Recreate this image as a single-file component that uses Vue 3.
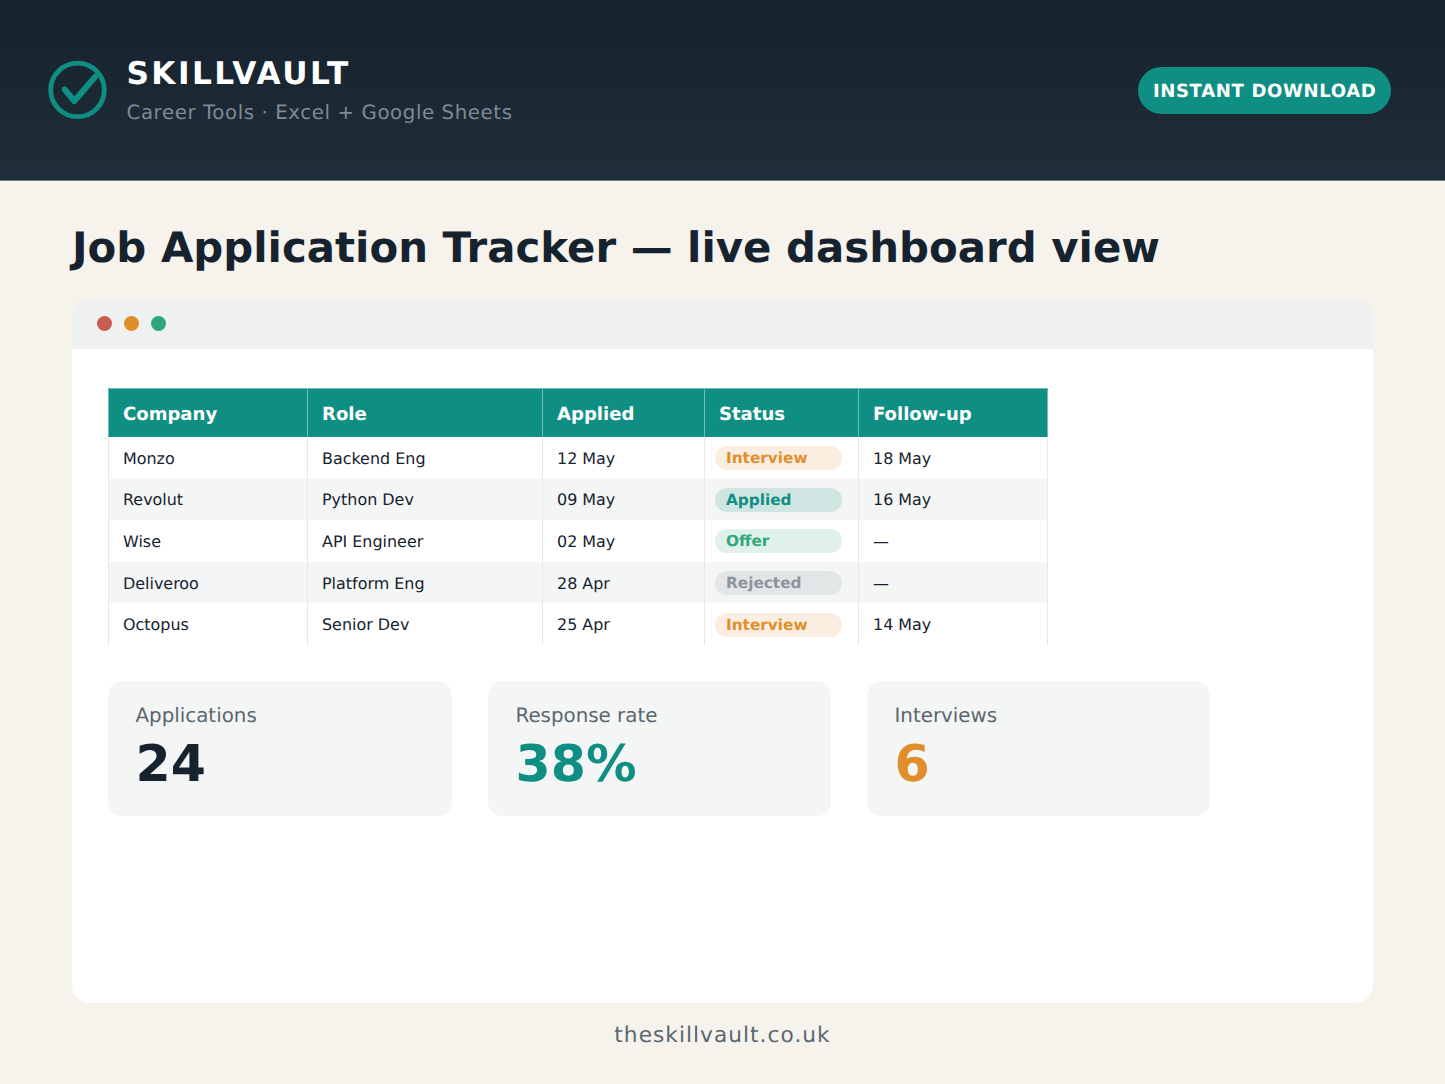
<template>
  <div class="page">
    <header class="top">
      <div class="brand">
        <svg class="logo" width="60" height="60" viewBox="0 0 60 60" aria-hidden="true">
          <circle cx="29.5" cy="29.9" r="26.8" fill="none" stroke="#0f8f83" stroke-width="4.8" />
          <path d="M16.7 29.4 L26.3 41 L47 17" fill="none" stroke="#0f8f83" stroke-width="6" stroke-linecap="round" stroke-linejoin="round" />
        </svg>
        <div class="brand-text">
          <div class="brand-name">SKILLVAULT</div>
          <div class="brand-sub">Career Tools · Excel + Google Sheets</div>
        </div>
      </div>
      <div class="cta">INSTANT DOWNLOAD</div>
    </header>

    <main class="main">
      <h1 class="title">Job Application Tracker — live dashboard view</h1>

      <section class="window">
        <div class="chrome">
          <span v-for="c in dots" :key="c" class="dot" :class="c"></span>
        </div>
        <div class="content">
          <table class="tracker">
            <colgroup>
              <col v-for="w in colWidths" :key="w" :class="w" />
            </colgroup>
            <thead>
              <tr>
                <th v-for="h in headers" :key="h">{{ h }}</th>
              </tr>
            </thead>
            <tbody>
              <tr v-for="row in rows" :key="row.company">
                <td>{{ row.company }}</td>
                <td>{{ row.role }}</td>
                <td>{{ row.applied }}</td>
                <td class="status-cell">
                  <span class="pill" :class="row.status.toLowerCase()">{{ row.status }}</span>
                </td>
                <td>{{ row.followUp }}</td>
              </tr>
            </tbody>
          </table>

          <div class="stats">
            <div v-for="s in stats" :key="s.label" class="stat">
              <div class="stat-label">{{ s.label }}</div>
              <div class="stat-value" :class="s.tone">{{ s.value }}</div>
            </div>
          </div>
        </div>
      </section>

      <footer class="foot">theskillvault.co.uk</footer>
    </main>
  </div>
</template>

<script setup>
const dots = ["red", "amber", "green"];
const colWidths = ["c1", "c2", "c3", "c4", "c5"];
const headers = ["Company", "Role", "Applied", "Status", "Follow-up"];
const rows = [
  { company: "Monzo", role: "Backend Eng", applied: "12 May", status: "Interview", followUp: "18 May" },
  { company: "Revolut", role: "Python Dev", applied: "09 May", status: "Applied", followUp: "16 May" },
  { company: "Wise", role: "API Engineer", applied: "02 May", status: "Offer", followUp: "—" },
  { company: "Deliveroo", role: "Platform Eng", applied: "28 Apr", status: "Rejected", followUp: "—" },
  { company: "Octopus", role: "Senior Dev", applied: "25 Apr", status: "Interview", followUp: "14 May" },
];
const stats = [
  { label: "Applications", value: "24", tone: "dark" },
  { label: "Response rate", value: "38%", tone: "teal" },
  { label: "Interviews", value: "6", tone: "orange" },
];
</script>

<style>
html,
body {
  margin: 0;
  background: #f6f3ec;
}
</style>

<style scoped>
.page {
  width: 1445px;
  height: 1084px;
  overflow: hidden;
  background: #f6f3ec;
  font-family: "DejaVu Sans", sans-serif;
  text-rendering: geometricPrecision;
  color: #16232e;
}

.top {
  box-sizing: border-box;
  height: 181px;
  padding: 0 54px 0 48px;
  display: flex;
  align-items: center;
  justify-content: space-between;
  background: linear-gradient(180deg, #16222d 0%, #1f2e3a 100%);
  border-bottom: 1px solid #757d81;
}
.brand {
  display: flex;
  align-items: center;
  gap: 18.5px;
}
.logo {
  flex: none;
}
.brand-name {
  font-size: 31.2px;
  line-height: 38px;
  font-weight: 700;
  letter-spacing: 2.4px;
  color: #fff;
}
.brand-sub {
  margin-top: 7px;
  font-size: 19.76px;
  line-height: 26px;
  letter-spacing: 0.6px;
  color: #808a93;
}
.cta {
  height: 47px;
  line-height: 49px;
  padding: 0 14.5px;
  border-radius: 24px;
  background: #0f8f83;
  color: #fff;
  font-size: 18.06px;
  font-weight: 700;
  letter-spacing: 0.64px;
}

.main {
  padding: 0 72px;
}
.title {
  margin: 0;
  padding-top: 39px;
  font-size: 41.88px;
  line-height: 55px;
  font-weight: 700;
  color: #16232e;
}

.window {
  margin-top: 23px;
  height: 705px;
  border-radius: 18px;
  background: #fff;
  overflow: hidden;
}
.chrome {
  height: 51px;
  padding-left: 25px;
  display: flex;
  align-items: center;
  gap: 12px;
  background: #eff1f0;
}
.dot {
  width: 15px;
  height: 15px;
  border-radius: 50%;
}
.dot.red { background: #c75c54; }
.dot.amber { background: #e08e2c; }
.dot.green { background: #2ea87a; }

.content {
  padding: 39px 36px 0;
}

.tracker {
  width: 939px;
  table-layout: fixed;
  border-collapse: collapse;
  font-size: 15.95px;
}
.c1 { width: 199px; }
.c2 { width: 235px; }
.c3 { width: 162px; }
.c4 { width: 154px; }
.c5 { width: 189px; }
.tracker th {
  height: 48.5px;
  padding: 2.5px 14.5px 0 14px;
  box-sizing: border-box;
  text-align: left;
  font-size: 18.06px;
  font-weight: 700;
  color: #fff;
  background: #0f8f83;
  border: 1px solid #6fbcb4;
  border-bottom: 0;
}
.tracker td {
  height: 41.6px;
  padding: 1px 14.5px 0 14px;
  box-sizing: border-box;
  color: #16232e;
  border-left: 1.5px solid #ece8e1;
  border-right: 1.5px solid #ece8e1;
}
.tracker tbody tr:nth-child(even) td {
  background: #f4f6f5;
}
.tracker td.status-cell {
  padding: 1px 16px 0 10px;
}

.pill {
  display: block;
  height: 24px;
  line-height: 25px;
  padding: 0 11px;
  border-radius: 12px;
  font-size: 15.3px;
  font-weight: 700;
}
.pill.interview { color: #e08e2c; background: #fbeee0; }
.pill.applied { color: #0f8f83; background: #cfe5e2; }
.pill.offer { color: #2ea87a; background: #dff1ea; }
.pill.rejected { color: #8a949c; background: #e3e6e7; }

.stats {
  margin-top: 36px;
  display: grid;
  grid-template-columns: 344px 343px 343px;
  gap: 36px;
}
.stat {
  box-sizing: border-box;
  height: 135px;
  padding: 22px 27.5px 0;
  border-radius: 14.5px;
  background: #f4f6f5;
}
.stat-label {
  font-size: 19.85px;
  line-height: 26px;
  color: #5a6670;
}
.stat-value {
  font-size: 50.6px;
  line-height: 60px;
  margin-top: 5px;
  font-weight: 700;
}
.stat-value.dark { color: #16232e; }
.stat-value.teal { color: #0f8f83; }
.stat-value.orange { color: #e08e2c; }

.foot {
  margin-top: 18px;
  text-align: center;
  font-size: 21.67px;
  line-height: 30px;
  letter-spacing: 1.04px;
  color: #5a6670;
}
</style>
